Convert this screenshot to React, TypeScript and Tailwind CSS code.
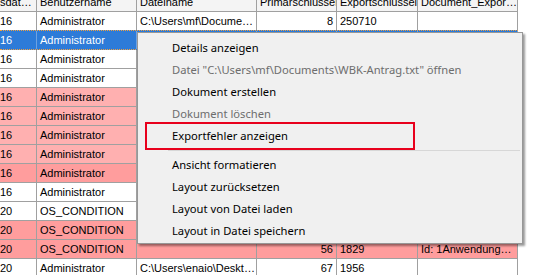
import React from 'react'

type Tone = 'white' | 'sel' | 'pink' | 'rose'

interface GridRow {
  tone: Tone
  date: string
  user: string
  file?: string
  pk?: string
  exp?: string
  doc?: string
}

const rows: GridRow[] = [
  { tone: 'white', date: '16', user: 'Administrator', file: 'C:\\Users\\mf\\Docume…', pk: '8', exp: '250710' },
  { tone: 'sel', date: '16', user: 'Administrator' },
  { tone: 'white', date: '16', user: 'Administrator' },
  { tone: 'white', date: '16', user: 'Administrator' },
  { tone: 'pink', date: '16', user: 'Administrator' },
  { tone: 'pink', date: '16', user: 'Administrator' },
  { tone: 'pink', date: '16', user: 'Administrator' },
  { tone: 'pink', date: '16', user: 'Administrator' },
  { tone: 'rose', date: '16', user: 'Administrator' },
  { tone: 'white', date: '16', user: 'Administrator' },
  { tone: 'white', date: '20', user: 'OS_CONDITION' },
  { tone: 'rose', date: '20', user: 'OS_CONDITION' },
  { tone: 'rose', date: '20', user: 'OS_CONDITION', pk: '56', exp: '1829', doc: 'Id: 1Anwendung…' },
  { tone: 'white', date: '20', user: 'Administrator', file: 'C:\\Users\\enaio\\Deskt…', pk: '67', exp: '1956' },
]

const toneClass: Record<Tone, string> = {
  white: 'bg-white text-black',
  sel: 'bg-[#2d7bd8] text-white',
  pink: 'bg-[#ffb0b0] text-black',
  rose: 'bg-[#ff9d9d] text-black',
}

// column widths incl. right grid line
const cols = ['w-[37px]', 'w-[100px]', 'w-[120px]', 'w-[80px]', 'w-[81px]', 'w-[100px]']

const menu: { label: string; disabled?: boolean; sep?: boolean }[] = [
  { label: 'Details anzeigen' },
  { label: 'Datei "C:\\Users\\mf\\Documents\\WBK-Antrag.txt" öffnen', disabled: true },
  { label: 'Dokument erstellen' },
  { label: 'Dokument löschen', disabled: true },
  { label: 'Exportfehler anzeigen' },
  { label: '', sep: true },
  { label: 'Ansicht formatieren' },
  { label: 'Layout zurücksetzen' },
  { label: 'Layout von Datei laden' },
  { label: 'Layout in Datei speichern' },
]

function Cell({ w, children, right, sel }: { w: string; children?: React.ReactNode; right?: boolean; sel?: boolean }) {
  return (
    <div
      className={`${w} h-full shrink-0 border-r ${sel ? 'border-[#6ea2e2]' : 'border-[#a0a0a0]'} px-[3px] flex items-center overflow-hidden whitespace-nowrap ${right ? 'justify-end' : ''}`}
    >
      {children}
    </div>
  )
}

export default function App() {
  return (
    <div className="relative w-[543px] h-[275px] overflow-hidden bg-white font-['Liberation_Sans',sans-serif] text-[11px]">
      <div className="-mt-[7px] w-[518px]">
        {/* header */}
        <div className="flex h-[19px] bg-[#f4f4f4] border-b border-[#a0a0a0] text-black">
          <div className="w-[37px] h-full shrink-0 border-r border-[#a0a0a0] flex items-center overflow-hidden whitespace-nowrap">sdat…</div>
          <Cell w={cols[1]}>Benutzername</Cell>
          <Cell w={cols[2]}>Dateiname</Cell>
          <Cell w={cols[3]}>Primärschlüssel</Cell>
          <Cell w={cols[4]}>Exportschlüssel</Cell>
          <Cell w={cols[5]}>Document_Expor…</Cell>
        </div>

        {rows.map((r, i) => {
          const sel = r.tone === 'sel'
          return (
            <div
              key={i}
              className={`flex ${toneClass[r.tone]} ${sel ? 'h-[20px] -mt-px border-y border-dotted border-[#f0a040]' : 'h-[19px] border-b border-[#a0a0a0]'}`}
            >
              <div className={`w-[37px] h-full shrink-0 border-r ${sel ? 'border-[#6ea2e2]' : 'border-[#a0a0a0]'} flex items-center overflow-hidden whitespace-nowrap`}>
                {r.date}
              </div>
              <Cell w={cols[1]} sel={sel}>{r.user}</Cell>
              <Cell w={cols[2]} sel={sel}>{r.file}</Cell>
              <Cell w={cols[3]} sel={sel} right>{r.pk}</Cell>
              <Cell w={cols[4]} sel={sel}>{r.exp}</Cell>
              <Cell w={cols[5]} sel={sel}>{r.doc}</Cell>
            </div>
          )
        })}
      </div>

      {/* context menu */}
      <div className="absolute left-[137px] top-[32px] w-[386px] bg-[#f0f0f0] border border-[#979797] shadow-[2px_2px_2px_rgba(0,0,0,0.4)] pt-[4px] pb-[1px] font-['Noto_Sans',sans-serif] text-[11.2px]">
        {menu.map((m, i) =>
          m.sep ? (
            <div key={i} className="h-[7px] flex items-center pl-[30px] pr-[2px]">
              <div className="h-px w-full bg-[#d7d7d7]" />
            </div>
          ) : (
            <div
              key={i}
              className={`h-[22px] flex items-center pl-[34px] whitespace-nowrap ${m.disabled ? 'text-[#6d6d6d]' : 'text-black'}`}
            >
              {m.label}
            </div>
          ),
        )}
      </div>

      {/* annotation */}
      <div className="absolute left-[145px] top-[122px] w-[270px] h-[28px] border-2 border-[#e8001c]" />
    </div>
  )
}
